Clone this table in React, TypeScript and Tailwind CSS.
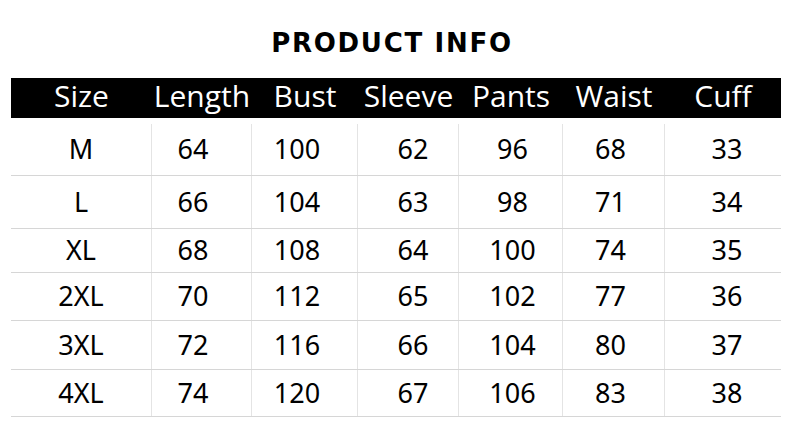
import React from "react";

const headers = ["Size", "Length", "Bust", "Sleeve", "Pants", "Waist", "Cuff"];
const rows: string[][] = [
  ["M", "64", "100", "62", "96", "68", "33"],
  ["L", "66", "104", "63", "98", "71", "34"],
  ["XL", "68", "108", "64", "100", "74", "35"],
  ["2XL", "70", "112", "65", "102", "77", "36"],
  ["3XL", "72", "116", "66", "104", "80", "37"],
  ["4XL", "74", "120", "67", "106", "83", "38"],
];
const rowHeights = ["h-[58px] pt-[6px]", "h-[53px]", "h-[44px]", "h-[48px]", "h-[49px]", "h-[47px]"];
const cellShift = ["", "pr-[17px]", "pr-[15px]", "pl-[10px]", "pl-[4px]", "pr-[6px]", "pl-[8px]"];
const gridCols = "grid grid-cols-[141px_100px_106px_101px_104px_102px_116px]";

export default function App() {
  return (
    <div className="w-[790px] h-[431px] bg-white overflow-hidden">
      <div className="h-[78px] pt-[30px] flex justify-center">
        <h1
          className="text-[26px] leading-[26px] font-bold text-black tracking-[1.7px] pr-[6px]"
          style={{ fontFamily: '"DejaVu Sans", sans-serif' }}
        >
          PRODUCT INFO
        </h1>
      </div>
      <div className="ml-[11px] w-[770px]">
        <div
          className={`${gridCols} h-[40px] bg-black text-white`}
          style={{ fontFamily: '"Open Sans", sans-serif' }}
        >
          {headers.map((h) => (
            <div key={h} className="flex items-center justify-center pb-[4px] text-[30px] leading-none">
              {h}
            </div>
          ))}
        </div>
        {rows.map((r, i) => (
          <div
            key={r[0]}
            className={`${gridCols} ${rowHeights[i]} border-b border-[#d6d6d6] text-black`}
            style={{ fontFamily: '"Noto Sans", sans-serif' }}
          >
            {r.map((c, j) => (
              <div
                key={j}
                className={`flex items-center justify-center text-[27px] ${cellShift[j]} ${
                  j < 6 ? "border-r border-[#e4e4e4]" : ""
                }`}
              >
                {c}
              </div>
            ))}
          </div>
        ))}
      </div>
    </div>
  );
}
